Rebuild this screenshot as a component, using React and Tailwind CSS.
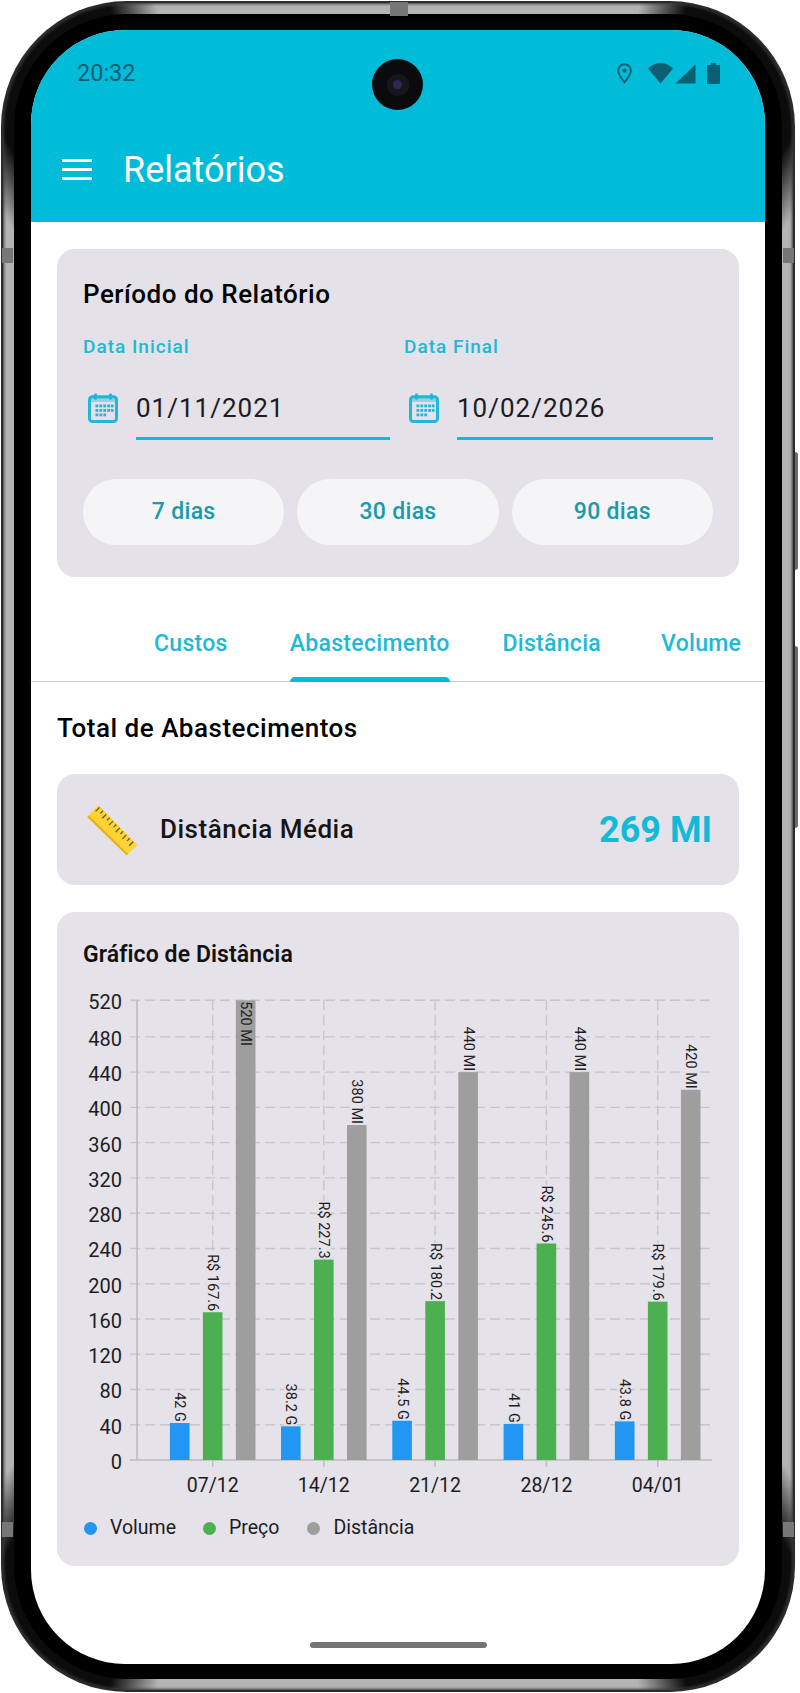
import React from 'react';

const X0 = 84;
const Y0 = 985;
const TOP = 1000.3;
const ZERO = 1460;

// the axis tops out just above 520, so that tick and bar are clamped to the top
const yOf = (v) => (v >= 520 ? TOP : ZERO - v * 0.8815) - Y0;

const groups = [
  { label: '07/12', cx: 212.7, volume: 42, price: 167.6, dist: 520 },
  { label: '14/12', cx: 323.8, volume: 38.2, price: 227.3, dist: 380 },
  { label: '21/12', cx: 435.1, volume: 44.5, price: 180.2, dist: 440 },
  { label: '28/12', cx: 546.4, volume: 41, price: 245.6, dist: 440 },
  { label: '04/01', cx: 657.7, volume: 43.8, price: 179.6, dist: 420 },
];

const ticks = [];
for (let v = 0; v <= 520; v += 40) ticks.push(v);

const CalendarIcon = () => (
  <svg width="30" height="30" viewBox="0 0 30 30" className="shrink-0">
    <rect x="1.5" y="3.8" width="27" height="24.7" rx="3" fill="none" stroke="#1FB8D6" strokeWidth="3" />
    <rect x="1.5" y="3.8" width="27" height="5.2" fill="#1FB8D6" fillOpacity="0.4" />
    <rect x="6" y="0.4" width="3" height="6.4" rx="1.3" fill="#1FB8D6" />
    <rect x="21" y="0.4" width="3" height="6.4" rx="1.3" fill="#1FB8D6" />
    <rect x="10" y="3" width="10" height="2.2" fill="#1FB8D6" />
    {[11.5, 16, 20.5].map((y, r) =>
      [7.5, 11.4, 15.3, 19.2, 22.8].map((x, c) =>
        r === 2 && c > 2 ? null : <rect key={`${r}-${c}`} x={x} y={y} width="2.8" height="2.8" fill="#1FB8D6" />
      )
    )}
  </svg>
);

const RulerIcon = () => (
  <svg width="52" height="52" viewBox="0 0 52 52" className="shrink-0">
    <polygon points="0.3,13 11.3,1 50.3,41 39.7,51.3" fill="#FBD334" />
    <polygon points="0.3,13 1.8,11.4 41,50 39.7,51.3" fill="#EFA91B" />
    {Array.from({ length: 11 }).map((_, i) => {
      const x = 12.6 + i * 3.35;
      const y = 3.4 + i * 3.43;
      const len = i % 2 === 0 ? 4 : 2.6;
      return <line key={i} x1={x} y1={y} x2={x - len} y2={y + len} stroke="#6D5A2A" strokeWidth="1.3" />;
    })}
  </svg>
);

const ValueLabel = ({ cx, v, text }) => {
  const len = text.length * 7.2;
  const top = yOf(v);
  const inside = top - len < TOP - Y0;
  const x = cx - X0;
  if (inside) {
    return (
      <text transform={`translate(${x} ${TOP - Y0 + 1}) rotate(90)`} fontSize="14.5" fill="#1d1d1f" dominantBaseline="central">
        {text}
      </text>
    );
  }
  return (
    <g>
      <rect x={x - 7} y={top - len - 1} width="14" height={len} fill="#E5E2E9" />
      <text transform={`translate(${x} ${top - 1}) rotate(90)`} fontSize="14.5" fill="#1d1d1f" dominantBaseline="central" textAnchor="end">
        {text}
      </text>
    </g>
  );
};

const Chart = () => (
  <svg width="628" height="510" viewBox="0 0 628 510" className="block">
    {ticks.map((v) => (
      <g key={v}>
        {v > 0 && <line x1="46" x2="628" y1={yOf(v)} y2={yOf(v)} stroke="#C8C5CC" strokeWidth="1.4" strokeDasharray="10 5" />}
        <text x="38" y={yOf(v) + 2} fontSize="20" fill="#1d1d1f" textAnchor="end" dominantBaseline="central">
          {v}
        </text>
      </g>
    ))}
    {groups.map((g) => (
      <line key={g.label} x1={g.cx - X0} x2={g.cx - X0} y1={TOP - Y0} y2={ZERO - Y0} stroke="#C8C5CC" strokeWidth="1.4" strokeDasharray="10 5" />
    ))}
    <line x1="53" x2="53" y1={TOP - Y0} y2={ZERO - Y0} stroke="#BDBBC2" strokeWidth="1.6" />
    <line x1="46" x2="628" y1={ZERO - Y0} y2={ZERO - Y0} stroke="#BDBBC2" strokeWidth="1.6" />
    {groups.map((g) => {
      const x = g.cx - X0;
      return (
        <g key={g.label}>
          <line x1={x} x2={x} y1={ZERO - Y0} y2={ZERO - Y0 + 7} stroke="#BDBBC2" strokeWidth="1.4" />
          <rect x={x - 42.8} y={yOf(g.volume)} width="19.6" height={yOf(0) - yOf(g.volume)} fill="#2196F3" />
          <rect x={x - 9.8} y={yOf(g.price)} width="19.6" height={yOf(0) - yOf(g.price)} fill="#4CAF50" />
          <rect x={x + 23.2} y={yOf(g.dist)} width="19.6" height={yOf(0) - yOf(g.dist)} fill="#9E9E9E" />
          <ValueLabel cx={g.cx - 33} v={g.volume} text={`${g.volume} G`} />
          <ValueLabel cx={g.cx} v={g.price} text={`R$ ${g.price}`} />
          <ValueLabel cx={g.cx + 33} v={g.dist} text={`${g.dist} MI`} />
          <text x={x} y={ZERO - Y0 + 25} fontSize="19.5" fill="#1d1d1f" textAnchor="middle" dominantBaseline="central">
            {g.label}
          </text>
        </g>
      );
    })}
  </svg>
);

const DateField = ({ label, value }) => (
  <div>
    <div className="h-[24px] text-[19px] leading-[24px] font-medium tracking-[1px] text-[#1CBAD7]">{label}</div>
    <div className="mt-[33px] flex h-[48px]">
      <div className="flex w-[53px] pl-[5px] pt-[1px]">
        <CalendarIcon />
      </div>
      <div className="flex-1 border-b-[3px] border-[#12BAD8] text-[26px] leading-[32px] tracking-[1px] text-[#1d1b20]">{value}</div>
    </div>
  </div>
);

const QuickButton = ({ children }) => (
  <button className="flex h-[66px] items-center justify-center rounded-[33px] bg-[#F5F5F7] text-[23px] font-medium tracking-[0.3px] text-[#1A9AAB]">{children}</button>
);

const Tab = ({ children, active, className }) => (
  <div className={`relative flex h-full items-start pt-[50px] text-[23px] font-medium tracking-[0.3px] text-[#1CBAD7] ${className}`}>
    {children}
    {active && <div className="absolute right-0 bottom-[-1px] left-0 h-[5px] rounded-t-[5px] bg-[#00BCD9]" />}
  </div>
);

const LegendItem = ({ color, children, className }) => (
  <div className={`flex items-center text-[19.5px] text-[#1d1d1f] ${className}`}>
    <span className={`mr-[13px] h-[13px] w-[13px] rounded-full ${color}`} />
    {children}
  </div>
);

export default function App() {
  return (
    <div className="relative h-[1693px] w-[800px] overflow-hidden bg-white font-['Roboto',sans-serif]">
      {/* side keys */}
      <div className="absolute top-[452px] right-[2px] h-[118px] w-[4px] rounded-r-[3px] bg-[#6a6a6a]" />
      <div className="absolute top-[646px] right-[2px] h-[182px] w-[4px] rounded-r-[3px] bg-[#6a6a6a]" />

      <div className="absolute top-[1px] left-[1px] h-[1691px] w-[794px] rounded-[126px] bg-[#2b2b2b] p-[2px]">
        <div className="h-full w-full rounded-[124px] bg-[conic-gradient(#b4b4b4_0deg_16deg,#0c0c0c_19deg_29deg,#b4b4b4_32deg_148deg,#0c0c0c_151deg_161deg,#b4b4b4_164deg_196deg,#0c0c0c_199deg_209deg,#b4b4b4_212deg_328deg,#0c0c0c_331deg_341deg,#b4b4b4_344deg)] p-[11px] shadow-[inset_0_0_3px_1px_#3a3a3a]">
          <div className="h-full w-full rounded-[113px] bg-black px-[17px] pt-[16px] pb-[15px]">
            <div className="relative flex h-full w-full flex-col overflow-hidden rounded-[94px] bg-white">
              <header className="h-[192px] shrink-0 bg-[#00BCD9]">
                <div className="flex h-[87px] items-center justify-between pr-[45px] pl-[46px] text-[#0C5E73]">
                  <span className="text-[23.5px]">20:32</span>
                  <div className="flex items-center">
                    <svg width="15" height="21" viewBox="0 0 15 21" className="mr-[16px]">
                      <path d="M7.5 1.2C3.9 1.2 1.2 4 1.2 7.6c0 4.3 6.3 11.8 6.3 11.8s6.3-7.500 6.300-11.800c0-3.600-2.700-6.400-6.300-6.400z" fill="none" stroke="#0C5E73" strokeWidth="1.9" />
                      <circle cx="7.5" cy="7.6" r="2.2" fill="#0C5E73" />
                    </svg>
                    <svg width="25" height="21" viewBox="0 0 25 21">
                      <path d="M0 5.500C3.500 2 8 0 12.500 0S21.500 2 25 5.500L12.500 20.500z" fill="#0C5E73" />
                    </svg>
                    <svg width="21" height="20" viewBox="0 0 21 20" className="ml-[2px] mt-[1px]">
                      <path d="M0.500 19.500L20.500 0.500V19.500z" fill="#0C5E73" />
                    </svg>
                    <svg width="13" height="21" viewBox="0 0 13 21" className="ml-[11px]">
                      <path d="M4 0h5v2h3a1 1 0 0 1 1 1v17a1 1 0 0 1-1 1H1a1 1 0 0 1-1-1V3a1 1 0 0 1 1-1h3z" fill="#0C5E73" />
                    </svg>
                  </div>
                </div>
                <div className="flex h-[105px] items-center pl-[31px] text-white">
                  <svg width="30" height="21" viewBox="0 0 30 21" className="block">
                    <rect y="0" width="30" height="3" fill="#fff" />
                    <rect y="9" width="30" height="3" fill="#fff" />
                    <rect y="18" width="30" height="3" fill="#fff" />
                  </svg>
                  <h1 className="ml-[31px] text-[36px] leading-none font-normal">Relatórios</h1>
                </div>
              </header>

              <main className="flex flex-col">
                <section className="mx-[26px] mt-[27px] h-[328px] rounded-[18px] bg-[#E4E1E8] px-[26px] pt-[29px]">
                  <h2 className="h-[32px] text-[26px] leading-[32px] font-medium tracking-[0.5px] text-black">Período do Relatório</h2>
                  <div className="mt-[25px] grid grid-cols-[307px_1fr] gap-x-[14px]">
                    <DateField label="Data Inicial" value="01/11/2021" />
                    <DateField label="Data Final" value="10/02/2026" />
                  </div>
                  <div className="mt-[39px] grid grid-cols-3 gap-x-[13px]">
                    <QuickButton>7 dias</QuickButton>
                    <QuickButton>30 dias</QuickButton>
                    <QuickButton>90 dias</QuickButton>
                  </div>
                </section>

                <nav className="flex h-[105px] border-b-[1.5px] border-[#CFCFCF] pl-[123px]">
                  <Tab>Custos</Tab>
                  <Tab active className="ml-[62px]">Abastecimento</Tab>
                  <Tab className="ml-[53px]">Distância</Tab>
                  <Tab className="ml-[60px]">Volume</Tab>
                </nav>

                <h2 className="mx-[26px] mt-[30px] h-[32px] text-[26px] leading-[32px] font-medium tracking-[0.5px] text-black">Total de Abastecimentos</h2>

                <section className="mx-[26px] mt-[30px] flex h-[111px] items-center rounded-[18px] bg-[#E4E1E8] pr-[27px] pl-[30px]">
                  <RulerIcon />
                  <span className="ml-[21px] flex-1 text-[26px] font-medium tracking-[0.5px] text-[#151515]">Distância Média</span>
                  <span className="text-[36px] font-bold text-[#12BAD8]">269 MI</span>
                </section>

                <section className="mx-[26px] mt-[27px] h-[654px] rounded-[18px] bg-[#E5E2E9] pl-[27px]">
                  <h3 className="-ml-[1px] h-[73px] pt-[29px] text-[23px] leading-[28px] font-semibold tracking-[0.1px] text-[#111]">Gráfico de Distância</h3>
                  <Chart />
                  <div className="mt-[20px] flex h-[26px]">
                    <LegendItem color="bg-[#2196F3]">Volume</LegendItem>
                    <LegendItem color="bg-[#4CAF50]" className="ml-[27px]">Preço</LegendItem>
                    <LegendItem color="bg-[#9E9E9E]" className="ml-[28px]">Distância</LegendItem>
                  </div>
                </section>
              </main>

              {/* camera */}
              <div className="absolute top-[29px] left-[341px] flex h-[51px] w-[51px] items-center justify-center rounded-full bg-[#0b0b0d]">
                <div className="flex h-[22px] w-[22px] items-center justify-center rounded-full bg-[#17171b]">
                  <div className="h-[9px] w-[9px] rounded-full bg-[#2c2a55]" />
                </div>
              </div>

              {/* gesture bar */}
              <div className="absolute bottom-[16px] left-[279px] h-[6px] w-[177px] rounded-full bg-[#757575]" />
            </div>
          </div>
        </div>
      </div>

      {/* antenna bands */}
      <div className="absolute top-[2px] left-[390px] h-[14px] w-[18px] bg-[#777]" />
      <div className="absolute top-[248px] left-[2px] h-[15px] w-[11px] bg-[#777]" />
      <div className="absolute top-[248px] left-[783px] h-[15px] w-[11px] bg-[#777]" />
      <div className="absolute top-[1522px] left-[2px] h-[15px] w-[11px] bg-[#777]" />
      <div className="absolute top-[1522px] left-[783px] h-[15px] w-[11px] bg-[#777]" />
    </div>
  );
}
